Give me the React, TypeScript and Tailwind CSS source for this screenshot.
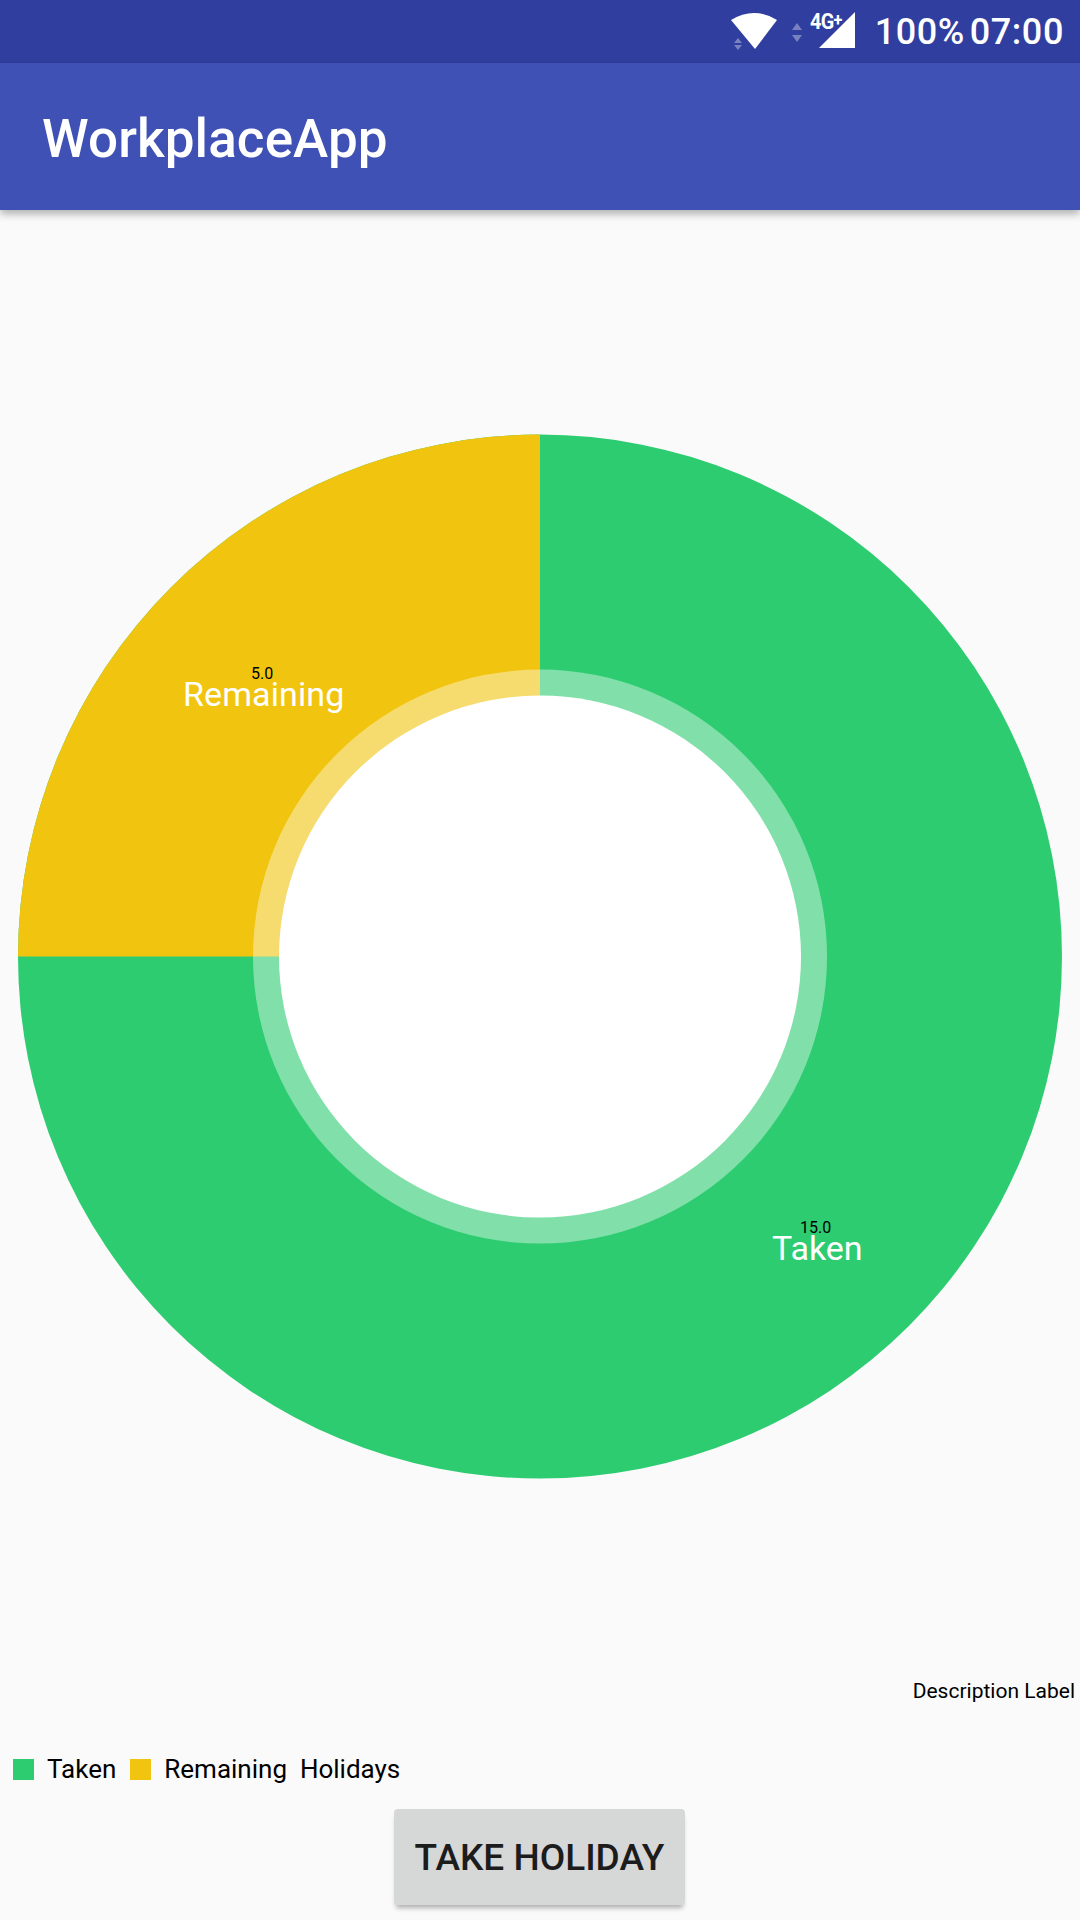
export default function App() {
  const roboto = { fontFamily: "Roboto, 'Noto Sans', sans-serif" };
  return (
    <div className="w-[1080px] h-[1920px] flex flex-col bg-[#fafafa] overflow-hidden" style={roboto}>
      <div className="h-[63px] shrink-0 bg-[#303f9f] flex items-center justify-end pr-[16px] text-white">
        <div className="relative w-[130px] h-[63px] shrink-0 mr-[19px]">
          <svg width="130" height="63" viewBox="724 0 130 63" className="absolute left-0 top-0">
            <path d="M729 20 Q752 6 775 20 L753 49 Z" fill="#fff" />
            <path d="M736 38 l4 5 h-8 Z M732 45 h8 l-4 5 Z" fill="#fff" opacity="0.35" />
            <path d="M795 23 l5 7 h-10 Z M790 35 h10 l-5 7 Z" fill="#fff" opacity="0.35" />
            <path d="M817 48 L853 12 V48 Z" fill="#fff" />
          </svg>
          <span className="absolute left-[84px] top-[11px] text-[22px] font-bold leading-[22px] tracking-[-0.8px] scale-x-90 origin-left">4G<span className="relative top-[-3px] text-[18px]">+</span></span>
        </div>
        <span className="text-[36px] font-medium leading-none mr-[5px] tracking-[0.5px]">100%</span>
        <span className="text-[36px] font-medium leading-none tracking-[0.6px]">07:00</span>
      </div>
      <div className="h-[147px] shrink-0 bg-[#3f51b5] flex items-center pl-[42px] pt-[6px] shadow-[0_4px_8px_rgba(0,0,0,0.3)] z-10 relative">
        <span className="text-white text-[53px] font-medium tracking-[0.1px]">WorkplaceApp</span>
      </div>
      <div className="relative h-[1520px] shrink-0">
        <svg width="1080" height="1520" viewBox="0 210 1080 1520" className="absolute left-0 top-0">
          <circle cx="540" cy="956.6" r="522" fill="#2ecc71" />
          <path d="M540 956.6 L18 956.6 A522 522 0 0 1 540 434.6 Z" fill="#f1c40f" />
          <circle cx="540" cy="956.6" r="287" fill="#fff" opacity="0.4" />
          <circle cx="540" cy="956.6" r="261" fill="#fff" />
        </svg>
        <span className="absolute left-[251px] top-[454px] text-[16px] leading-[20px] text-black">5.0</span>
        <span className="absolute left-[183px] top-[464px] text-[34px] leading-[40px] text-white tracking-[0.1px]">Remaining</span>
        <span className="absolute left-[800px] top-[1008px] text-[16px] leading-[20px] text-black">15.0</span>
        <span className="absolute left-[772px] top-[1018px] text-[34px] leading-[40px] text-white">Taken</span>
      </div>
      <div className="absolute left-0 top-[1679px] w-[1075px] text-right text-[21px] leading-[24px] text-black">Description Label</div>
      <div className="absolute left-[13px] top-[1752px] flex items-center h-[34px] text-[26px] text-black">
        <span className="w-[21px] h-[21px] bg-[#2ecc71] mr-[13px]" />
        <span className="mr-[14px]">Taken</span>
        <span className="w-[21px] h-[21px] bg-[#f1c40f] mr-[13px]" />
        <span className="whitespace-pre">Remaining  Holidays</span>
      </div>
      <button className="absolute left-[394px] top-[1809px] w-[291px] h-[96px] pt-[2px] rounded-[4px] bg-[#d6d7d7] text-[#1c1c1c] text-[37px] font-medium shadow-[0_5px_5px_-2px_rgba(0,0,0,0.3)]">TAKE HOLIDAY</button>
    </div>
  );
}
